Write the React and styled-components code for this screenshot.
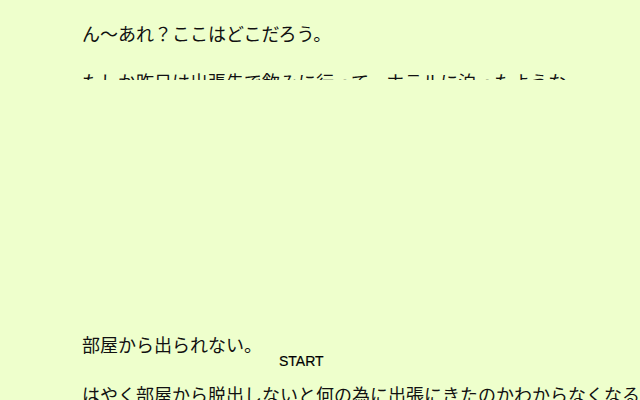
import React from "react";
import styled, { createGlobalStyle } from "styled-components";

const Global = createGlobalStyle`
  html, body { margin: 0; padding: 0; background: #eeffcc; }
  body { font-family: "Noto Sans CJK JP", "Noto Sans", sans-serif; color: #111; }
`;

const Screen = styled.div`
  width: 640px;
  height: 400px;
  overflow: hidden;
  display: flex;
  flex-direction: column;
  justify-content: space-between;
  padding: 0 0 0 82px;
  box-sizing: border-box;
  background: #eeffcc;
`;

const MessageBox = styled.div`
  height: 80px;
  overflow: hidden;
  padding-top: 1px;
  box-sizing: border-box;
`;

const Bottom = styled.div`
  height: 72px;
  overflow: visible;
`;

const Line = styled.p`
  margin: ${(p) => p.$top || 17}px 0 18px;
  font-size: 18px;
  line-height: 30px;
  white-space: nowrap;
`;

const Start = styled.span`
  display: inline-block;
  margin-left: 17px;
  font-family: "Liberation Sans", Arial, sans-serif;
  font-size: 14px;
  line-height: 0;
  vertical-align: -14px;
  color: #000;
  -webkit-text-stroke: 0.2px #000;
`;

export default function App() {
  return (
    <>
      <Global />
      <Screen>
        <MessageBox>
          <Line>ん～あれ？ここはどこだろう。</Line>
          <Line>たしか昨日は出張先で飲みに行って、ホテルに泊ったような</Line>
        </MessageBox>
        <Bottom>
          <Line $top={1}>
            部屋から出られない。<Start>START</Start>
          </Line>
          <Line>はやく部屋から脱出しないと何の為に出張にきたのかわからなくなる</Line>
        </Bottom>
      </Screen>
    </>
  );
}
